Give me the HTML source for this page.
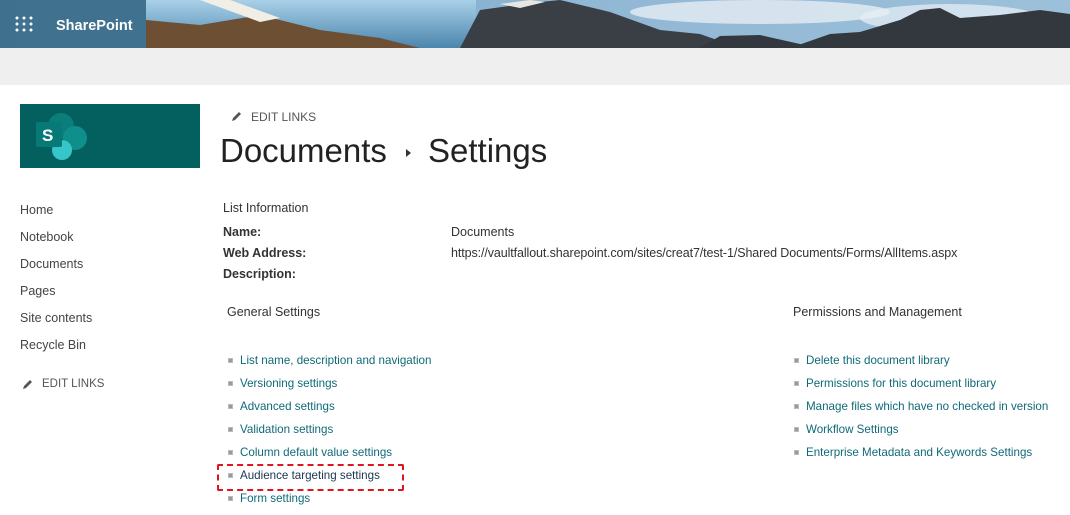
<!DOCTYPE html>
<html><head><meta charset="utf-8"><style>
body{margin:0;width:1070px;height:515px;overflow:hidden;background:#fff;font-family:"Liberation Sans",sans-serif;color:#333;position:relative}
.a{position:absolute;white-space:nowrap}
.l{color:#0f6a77;font-size:11.6px}
.sq{position:absolute;width:5px;height:5px;background:#999;border:1px solid #bbb;box-sizing:border-box}
.nav{font-size:12.5px;color:#444}
b{font-weight:bold;color:#333}
</style></head><body>
<svg class="a" style="left:0;top:0" width="1070" height="48">
<defs>
<linearGradient id="sky" x1="0" y1="0" x2="1" y2="0"><stop offset="0" stop-color="#5d8fb5"/><stop offset=".5" stop-color="#8fb6d4"/><stop offset="1" stop-color="#9dc0da"/></linearGradient>
<linearGradient id="ice" x1="0" y1="0" x2="0" y2="1"><stop offset="0" stop-color="#a9d0e8"/><stop offset="1" stop-color="#4b86ad"/></linearGradient>
</defs>
<rect width="1070" height="48" fill="url(#sky)"/>
<ellipse cx="760" cy="12" rx="130" ry="12" fill="#e6eef4" opacity=".8"/>
<ellipse cx="950" cy="18" rx="90" ry="14" fill="#e8eff5" opacity=".7"/>
<rect x="146" y="0" width="330" height="48" fill="url(#ice)"/>
<polygon points="146,48 146,20 200,25 260,15 320,30 380,38 420,48" fill="#6d5034"/>
<polygon points="200,0 230,0 280,18 260,22" fill="#f1eee6"/>
<polygon points="460,48 480,10 530,3 560,0 610,12 660,30 700,34 740,48" fill="#3a3f46"/>
<polygon points="500,4 530,0 545,2 520,8" fill="#e8e6e0"/>
<polygon points="700,48 720,36 760,35 800,44 820,48" fill="#33383e"/>
<polygon points="790,48 830,34 860,32 900,20 920,10 940,8 960,18 1000,15 1040,10 1070,14 1070,48" fill="#33383f"/>
<rect width="146" height="48" fill="#3d6f8c" opacity=".93"/>
<g fill="#fff"><circle cx="17" cy="18" r="1.5"/><circle cx="24" cy="18" r="1.5"/><circle cx="31" cy="18" r="1.5"/><circle cx="17" cy="24" r="1.5"/><circle cx="24" cy="24" r="1.5"/><circle cx="31" cy="24" r="1.5"/><circle cx="17" cy="30" r="1.5"/><circle cx="24" cy="30" r="1.5"/><circle cx="31" cy="30" r="1.5"/></g>
<text x="56" y="30" fill="#fff" font-family="Liberation Sans" font-weight="bold" font-size="14.5">SharePoint</text>
</svg>
<div class="a" style="left:0;top:48px;width:1070px;height:37px;background:#efefef"></div>
<svg class="a" style="left:20px;top:104px" width="180" height="64">
<rect width="180" height="64" fill="#03605e"/>
<circle cx="41" cy="22" r="13" fill="#0b7d7a"/>
<circle cx="55" cy="34" r="12" fill="#0f8f8c"/>
<circle cx="42" cy="46" r="10" fill="#36c5c9"/>
<rect x="16" y="18" width="26" height="25" rx="2" fill="#077a78"/>
<text x="22" y="37" fill="#fff" font-family="Liberation Sans" font-weight="bold" font-size="17">S</text>
</svg>
<svg class="a" style="left:231px;top:110px" width="12" height="12"><path d="M1 11 L2 8 L8 2 L10 4 L4 10 Z" fill="#555"/></svg>
<div class="a" style="left:251px;top:110px;font-size:12px;color:#555">EDIT LINKS</div>
<div class="a" style="left:220px;top:132px;font-size:33px;color:#222">Documents</div>
<div class="a" style="left:406px;top:149px;width:0;height:0;border-left:5px solid #333;border-top:4px solid transparent;border-bottom:4px solid transparent"></div>
<div class="a" style="left:428px;top:132px;font-size:33px;color:#222">Settings</div>
<div class="a nav" style="left:20px;top:203px">Home</div>
<div class="a nav" style="left:20px;top:230px">Notebook</div>
<div class="a nav" style="left:20px;top:257px">Documents</div>
<div class="a nav" style="left:20px;top:284px">Pages</div>
<div class="a nav" style="left:20px;top:311px">Site contents</div>
<div class="a nav" style="left:20px;top:338px">Recycle Bin</div>
<svg class="a" style="left:22px;top:378px" width="12" height="12"><path d="M1 11 L2 8 L8 2 L10 4 L4 10 Z" fill="#555"/></svg>
<div class="a" style="left:42px;top:378px;font-size:11.5px;color:#555">EDIT LINKS</div>
<div class="a" style="left:223px;top:201px;font-size:12.5px">List Information</div>
<div class="a" style="left:223px;top:225px;font-size:12.5px"><b>Name:</b></div>
<div class="a" style="left:223px;top:246px;font-size:12.5px"><b>Web Address:</b></div>
<div class="a" style="left:223px;top:267px;font-size:12.5px"><b>Description:</b></div>
<div class="a" style="left:451px;top:225px;font-size:12.5px">Documents</div>
<div class="a" style="left:451px;top:246px;font-size:12.5px;letter-spacing:-.1px">https://vaultfallout.sharepoint.com/sites/creat7/test-1/Shared Documents/Forms/AllItems.aspx</div>
<div class="a" style="left:227px;top:305px;font-size:12.5px">General Settings</div>
<div class="a" style="left:793px;top:305px;font-size:12.5px">Permissions and Management</div>
<div class="sq" style="left:228px;top:358px"></div><div class="a l" style="left:240px;top:354px">List name, description and navigation</div>
<div class="sq" style="left:228px;top:381px"></div><div class="a l" style="left:240px;top:377px">Versioning settings</div>
<div class="sq" style="left:228px;top:404px"></div><div class="a l" style="left:240px;top:400px">Advanced settings</div>
<div class="sq" style="left:228px;top:427px"></div><div class="a l" style="left:240px;top:423px">Validation settings</div>
<div class="sq" style="left:228px;top:450px"></div><div class="a l" style="left:240px;top:446px">Column default value settings</div>
<div class="sq" style="left:228px;top:473px"></div><div class="a l" style="left:240px;top:469px;color:#1a3550">Audience targeting settings</div>
<div class="sq" style="left:228px;top:496px"></div><div class="a l" style="left:240px;top:492px">Form settings</div>
<div class="a" style="left:217px;top:464px;width:187px;height:27px;border:2.5px dashed #e0161e;border-radius:2px;box-sizing:border-box"></div>
<div class="sq" style="left:794px;top:358px"></div><div class="a l" style="left:806px;top:354px">Delete this document library</div>
<div class="sq" style="left:794px;top:381px"></div><div class="a l" style="left:806px;top:377px">Permissions for this document library</div>
<div class="sq" style="left:794px;top:404px"></div><div class="a l" style="left:806px;top:400px">Manage files which have no checked in version</div>
<div class="sq" style="left:794px;top:427px"></div><div class="a l" style="left:806px;top:423px">Workflow Settings</div>
<div class="sq" style="left:794px;top:450px"></div><div class="a l" style="left:806px;top:446px">Enterprise Metadata and Keywords Settings</div>
</body></html>
